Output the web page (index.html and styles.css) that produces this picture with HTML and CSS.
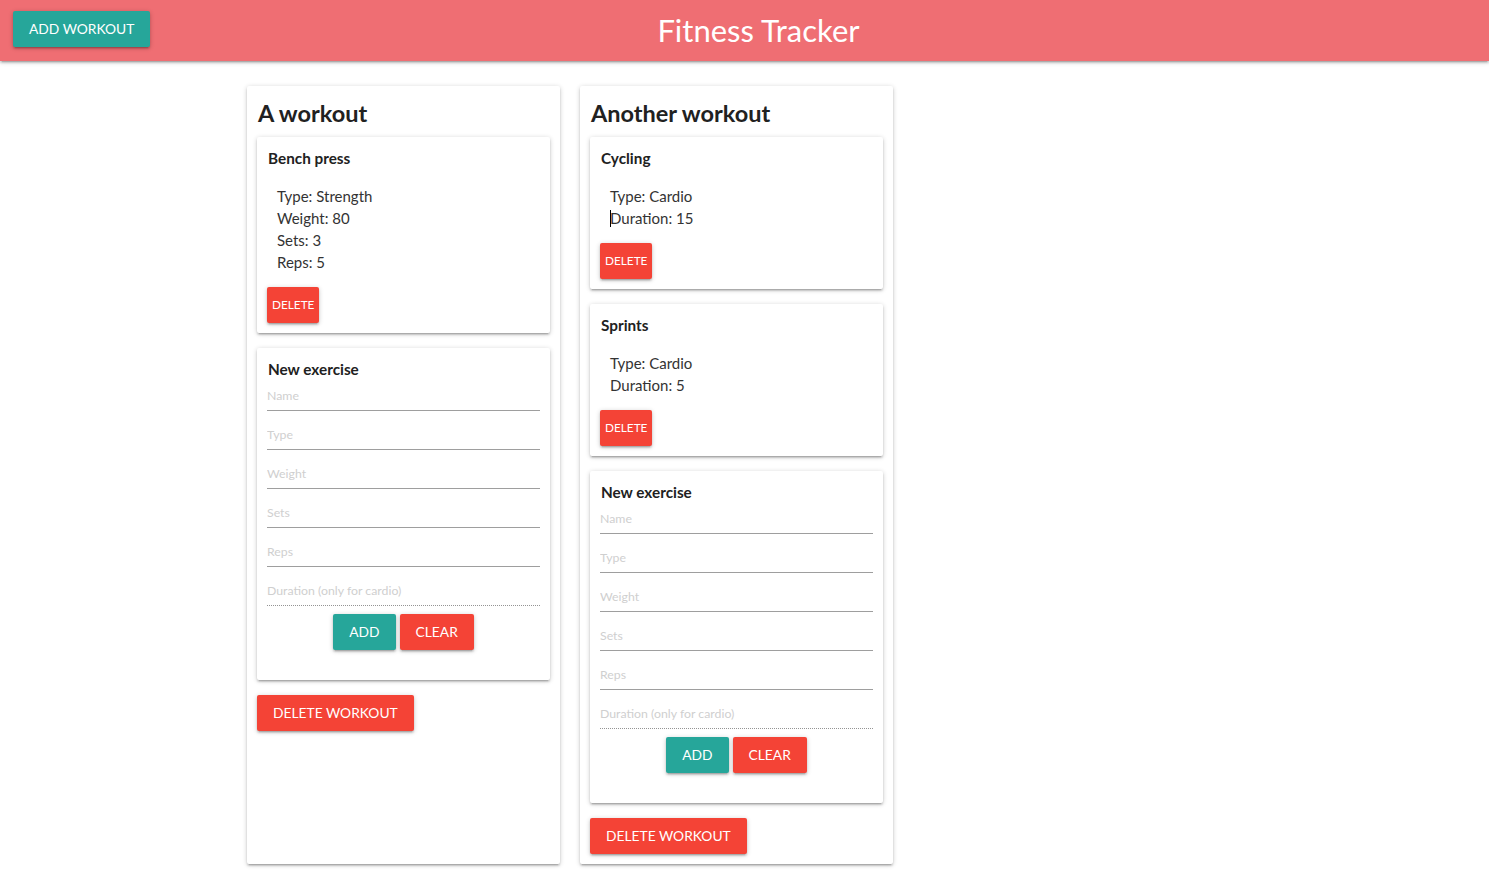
FILE: index.html
```html
<!DOCTYPE html>
<html lang="en">
<head>
<meta charset="utf-8">
<title>Fitness Tracker</title>
<link rel="stylesheet" href="styles.css">
</head>
<body>
<header class="topbar">
  <div class="topbar-left"><button class="btn btn-teal">Add workout</button></div>
  <h1 class="brand">Fitness Tracker</h1>
  <div></div>
</header>
<main class="board">
  <section class="workout">
    <h2 class="workout-title">A workout</h2>
    <div class="card">
      <h3 class="card-title">Bench press</h3>
      <ul class="details">
        <li>Type: Strength</li>
        <li>Weight: 80</li>
        <li>Sets: 3</li>
        <li>Reps: 5</li>
      </ul>
      <button class="btn btn-red btn-small">Delete</button>
    </div>
    <form class="card new-exercise">
      <h3 class="card-title">New exercise</h3>
      <input class="field" type="text" placeholder="Name">
      <input class="field" type="text" placeholder="Type">
      <input class="field" type="text" placeholder="Weight">
      <input class="field" type="text" placeholder="Sets">
      <input class="field" type="text" placeholder="Reps">
      <input class="field field-disabled" type="text" placeholder="Duration (only for cardio)">
      <div class="actions">
        <button type="button" class="btn btn-teal">Add</button>
        <button type="button" class="btn btn-red">Clear</button>
      </div>
    </form>
    <button class="btn btn-red">Delete workout</button>
  </section>
  <section class="workout">
    <h2 class="workout-title">Another workout</h2>
    <div class="card">
      <h3 class="card-title">Cycling</h3>
      <ul class="details">
        <li>Type: Cardio</li>
        <li><span class="caret"></span>Duration: 15</li>
      </ul>
      <button class="btn btn-red btn-small">Delete</button>
    </div>
    <div class="card">
      <h3 class="card-title">Sprints</h3>
      <ul class="details">
        <li>Type: Cardio</li>
        <li>Duration: 5</li>
      </ul>
      <button class="btn btn-red btn-small">Delete</button>
    </div>
    <form class="card new-exercise">
      <h3 class="card-title">New exercise</h3>
      <input class="field" type="text" placeholder="Name">
      <input class="field" type="text" placeholder="Type">
      <input class="field" type="text" placeholder="Weight">
      <input class="field" type="text" placeholder="Sets">
      <input class="field" type="text" placeholder="Reps">
      <input class="field field-disabled" type="text" placeholder="Duration (only for cardio)">
      <div class="actions">
        <button type="button" class="btn btn-teal">Add</button>
        <button type="button" class="btn btn-red">Clear</button>
      </div>
    </form>
    <button class="btn btn-red">Delete workout</button>
  </section>
</main>
</body>
</html>
```
FILE: styles.css
```css
* { box-sizing: border-box; }

html, body {
  margin: 0;
  padding: 0;
  background: #fff;
  font-family: Lato, "Open Sans", sans-serif;
  font-size: 15px;
  color: rgba(0, 0, 0, 0.87);
}

.topbar {
  height: 61px;
  background: #ef6e73;
  display: grid;
  grid-template-columns: 1fr auto 1fr;
  align-items: center;
  padding: 0 13px;
  box-shadow: 0 2px 2px 0 rgba(0,0,0,0.14), 0 3px 1px -2px rgba(0,0,0,0.12), 0 1px 5px 0 rgba(0,0,0,0.2);
  position: relative;
  z-index: 1;
}

.topbar-left { display: flex; align-items: center; margin-top: -3px; }

.brand {
  margin: 0 0 0 28px;
  font-size: 31px;
  font-weight: 400;
  line-height: 61px;
  color: #fff;
  white-space: nowrap;
}

.btn {
  display: inline-block;
  height: 36px;
  line-height: 36px;
  padding: 0 16px;
  border: none;
  border-radius: 2px;
  font-family: Lato, "Open Sans", sans-serif;
  font-size: 13.8px;
  letter-spacing: 0;
  text-transform: uppercase;
  color: #fff;
  cursor: pointer;
  box-shadow: 0 2px 2px 0 rgba(0,0,0,0.14), 0 3px 1px -2px rgba(0,0,0,0.12), 0 1px 5px 0 rgba(0,0,0,0.2);
  white-space: nowrap;
}

.btn-teal { background: #26a69a; }
.btn-red { background: #f44336; }

.btn-small {
  padding: 0 5px;
  font-size: 11.8px;
  letter-spacing: 0;
}

.board {
  display: flex;
  align-items: stretch;
  gap: 20px;
  padding: 25px 0 30px 247px;
}

.workout {
  width: 313px;
  padding: 10px;
  background: #fff;
  border-radius: 2px;
  box-shadow: 0 2px 2px 0 rgba(0,0,0,0.14), 0 3px 1px -2px rgba(0,0,0,0.12), 0 1px 5px 0 rgba(0,0,0,0.2);
}

.workout-title {
  margin: 0 0 9px 1px;
  padding-top: 2px;
  font-size: 23.5px;
  font-weight: 700;
  line-height: 30px;
  color: #212121;
}

.card {
  display: block;
  margin: 0 0 15px;
  padding: 10px;
  background: #fff;
  border-radius: 2px;
  box-shadow: 0 2px 2px 0 rgba(0,0,0,0.14), 0 3px 1px -2px rgba(0,0,0,0.12), 0 1px 5px 0 rgba(0,0,0,0.2);
}

.card-title {
  margin: 0 0 0 1px;
  font-size: 15.3px;
  font-weight: 700;
  line-height: 22px;
  color: #212121;
}

.details {
  list-style: none;
  margin: 16px 0 14px;
  padding: 0 0 0 10px;
  line-height: 22px;
  color: #333;
}

.caret {
  display: inline-block;
  width: 1px;
  height: 17px;
  background: #000;
  vertical-align: -3px;
  margin-right: -1px;
}

.field {
  display: block;
  width: 100%;
  height: 31px;
  margin: 0 0 8px;
  padding: 0;
  border: none;
  border-bottom: 1px solid #9e9e9e;
  background: transparent;
  font-family: Lato, "Open Sans", sans-serif;
  font-size: 12.3px;
  color: #333;
  outline: none;
}

.field::placeholder { color: #cfcfcf; }

.field-disabled { border-bottom: 1px dotted rgba(0,0,0,0.42); }

.actions {
  display: flex;
  justify-content: center;
  gap: 4px;
  margin-bottom: 20px;
}
```
